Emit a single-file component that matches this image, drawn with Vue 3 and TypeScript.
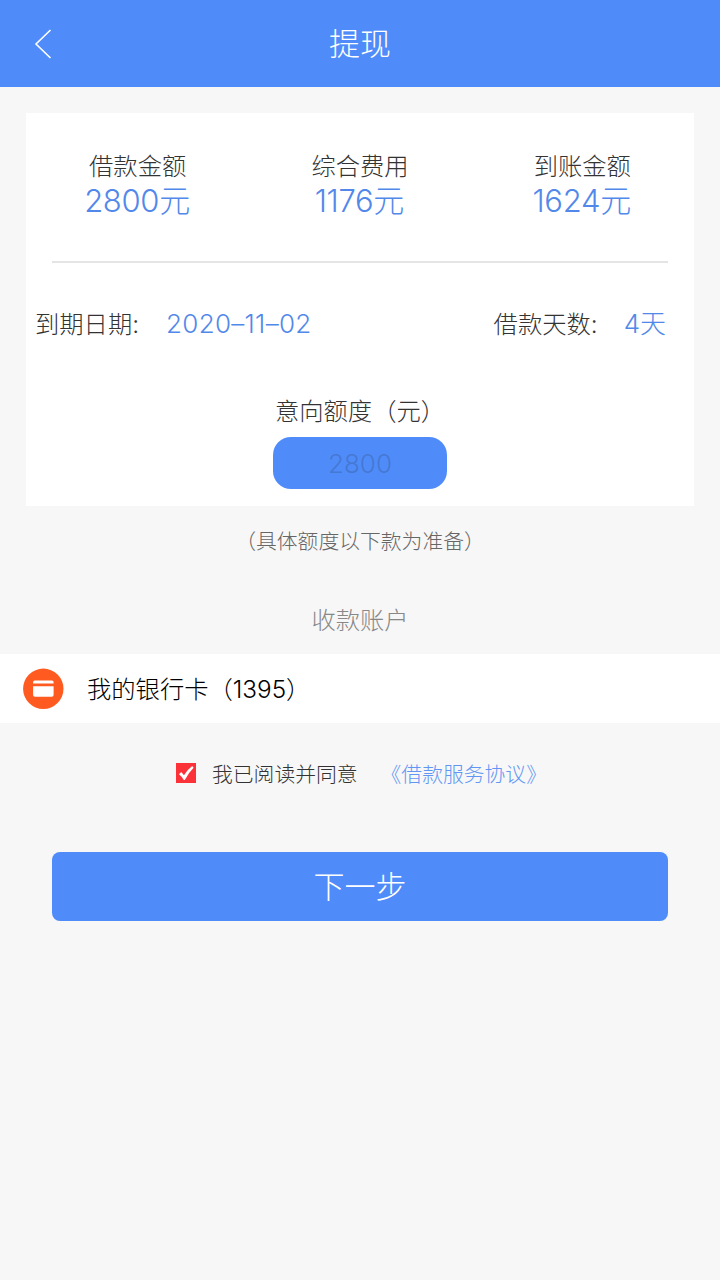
<script setup lang="ts">
interface Amount {
  label: string
  value: string
}

const amounts: Amount[] = [
  { label: '借款金额', value: '2800' },
  { label: '综合费用', value: '1176' },
  { label: '到账金额', value: '1624' },
]
const dueDate = '2020–11–02'
const loanDays = 4
const intended = 2800
const cardTail = '1395'
</script>

<template>
  <div class="page" lang="zh-CN">
    <header class="bar">
      <svg class="back" viewBox="0 0 18 30" width="18" height="30">
        <path d="M16.5 1L2 15L16.5 29" fill="none" stroke="#fff" stroke-width="1.6" />
      </svg>
      <h1 class="title">提现</h1>
    </header>

    <section class="card">
      <div class="amounts">
        <div v-for="a in amounts" :key="a.label" class="amount">
          <div class="label">{{ a.label }}</div>
          <div class="value"><span class="digits">{{ a.value }}</span>元</div>
        </div>
      </div>
      <div class="terms">
        <div class="term">
          <span>到期日期:</span>
          <span class="term-value date">{{ dueDate }}</span>
        </div>
        <div class="term days">
          <span>借款天数:</span>
          <span class="term-value">{{ loanDays }}天</span>
        </div>
      </div>
      <div class="intent">意向额度（元）</div>
      <div class="pill">{{ intended }}</div>
    </section>

    <p class="note">（具体额度以下款为准备）</p>
    <h2 class="account-title">收款账户</h2>

    <div class="bank">
      <svg class="bank-icon" viewBox="0 0 42 42" width="42" height="42">
        <circle cx="21.3" cy="20.8" r="20.2" fill="#ff5a1f" />
        <path d="M12.700 12.600h17.300q1.600 0 1.600 1.600v1.300h-20.500v-1.300q0-1.600 1.600-1.600z" fill="#fff" />
        <path d="M11.100 18.200h20.500v8.800q0 1.800-1.800 1.800h-16.900q-1.800 0-1.800-1.800z" fill="#fff" />
      </svg>
      <span class="bank-name">我的银行卡（{{ cardTail }}）</span>
    </div>

    <div class="agree">
      <svg class="check" viewBox="0 0 20 20" width="20" height="20">
        <rect width="20" height="20" fill="#fb3338" />
        <path d="M3 11.2L5.2 9L8 12.2Q11.5 6.500 16.200 3L17.600 4.800Q12.500 9.800 8.800 17H7.800Q6 13.600 3 11.200z" fill="#fff" />
      </svg>
      <span class="agree-text">我已阅读并同意</span>
      <a class="link">《借款服务协议》</a>
    </div>

    <button class="next" type="button">下一步</button>
  </div>
</template>

<style>
body {
  margin: 0;
  background: #f7f7f7;
}
</style>

<style scoped>
.page {
  display: flex;
  flex-direction: column;
  width: 720px;
  height: 1280px;
  overflow: hidden;
  background: #f7f7f7;
  color: #333;
  font-family: Inter, "Noto Sans CJK SC", sans-serif;
  font-weight: 300;
  font-size: 24.3px;
  white-space: nowrap;
}
.bar {
  display: grid;
  grid-template-columns: 80px 1fr 80px;
  align-items: center;
  height: 87px;
  flex: none;
  background: #4f8cf9;
  color: #fff;
}
.back {
  margin-left: 34px;
}
.title {
  margin: 0;
  text-align: center;
  font-size: 31px;
  font-weight: 300;
  line-height: 46px;
}
.card {
  display: flex;
  flex-direction: column;
  height: 393px;
  margin: 26px 26px 0;
  flex: none;
  background: #fff;
}
.amounts {
  display: grid;
  grid-template-columns: repeat(3, 1fr);
  height: 148px;
  margin: 0 26px;
  border-bottom: 2px solid #e5e5e5;
}
.amount {
  padding-top: 36px;
  text-align: center;
}
.amount:first-child {
  margin-left: -34px;
}
.amount:last-child {
  margin-right: -34px;
}
.label {
  line-height: 34px;
}
.value {
  margin-left: -1px;
  font-size: 31px;
  line-height: 36px;
  color: #5288ea;
}
.digits {
  letter-spacing: -0.3px;
}
.terms {
  display: flex;
  justify-content: space-between;
  padding: 43px 28px 0 9px;
  line-height: 36px;
}
.term {
  display: flex;
  gap: 27px;
}
.days {
  gap: 26px;
}
.term-value {
  font-size: 26px;
  color: #5288ea;
}
.date {
  letter-spacing: 0.3px;
}
.intent {
  margin-top: 51px;
  text-align: center;
  line-height: 36px;
}
.pill {
  align-self: center;
  width: 174px;
  height: 52px;
  margin-top: 8px;
  border-radius: 18px;
  background: #4f8cf9;
  color: #4578d3;
  text-align: center;
  font-size: 26px;
  line-height: 53px;
}
.note {
  margin: 21px 0 0;
  text-align: center;
  font-size: 20.8px;
  line-height: 30px;
  color: #666;
}
.account-title {
  margin: 45px 0 0;
  text-align: center;
  font-size: 24.3px;
  font-weight: 300;
  line-height: 36px;
  color: #888;
}
.bank {
  display: flex;
  align-items: center;
  gap: 23px;
  height: 69px;
  margin-top: 16px;
  padding-left: 22px;
  flex: none;
  background: #fff;
  color: #000;
}
.bank-name {
  padding-bottom: 2px;
}
.agree {
  display: flex;
  align-items: center;
  margin-top: 35px;
  padding-left: 176px;
  font-size: 20.8px;
  line-height: 30px;
}
.agree-text {
  margin-left: 16px;
}
.agree-text,
.link {
  padding-top: 2px;
  margin-bottom: -2px;
}
.link {
  margin-left: 23px;
  color: #6296f3;
}
.next {
  height: 69px;
  margin: 64px 52px 0;
  padding: 0;
  border: 0;
  border-radius: 8px;
  background: #4f8cf9;
  color: #fff;
  font-family: inherit;
  font-size: 31px;
  font-weight: 300;
  line-height: 69px;
}
</style>
